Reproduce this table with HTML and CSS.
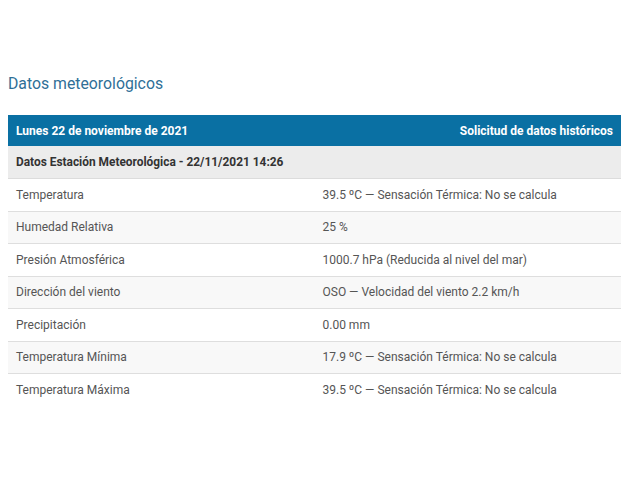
FILE: index.html
```html
<!DOCTYPE html>
<html lang="es">
<head>
<meta charset="utf-8">
<link rel="stylesheet" href="styles.css">
</head>
<body>
<h2 class="title">Datos meteorológicos</h2>
<table class="wx">
  <thead>
    <tr class="head">
      <th>Lunes 22 de noviembre de 2021</th>
      <th class="right">Solicitud de datos históricos</th>
    </tr>
    <tr class="sub">
      <th colspan="2">Datos Estación Meteorológica - 22/11/2021 14:26</th>
    </tr>
  </thead>
  <tbody>
    <tr><td>Temperatura</td><td>39.5 ºC — Sensación Térmica: No se calcula</td></tr>
    <tr class="alt"><td>Humedad Relativa</td><td>25 %</td></tr>
    <tr><td>Presión Atmosférica</td><td>1000.7 hPa (Reducida al nivel del mar)</td></tr>
    <tr class="alt"><td>Dirección del viento</td><td>OSO — Velocidad del viento 2.2 km/h</td></tr>
    <tr><td>Precipitación</td><td>0.00 mm</td></tr>
    <tr class="alt"><td>Temperatura Mínima</td><td>17.9 ºC — Sensación Térmica: No se calcula</td></tr>
    <tr class="last"><td>Temperatura Máxima</td><td>39.5 ºC — Sensación Térmica: No se calcula</td></tr>
  </tbody>
</table>
</body>
</html>
```
FILE: styles.css
```css
html, body { background: #fff; }
body {
  margin: 0;
  padding: 0 21px 0 8px;
  font-family: Roboto, "Liberation Sans", sans-serif;
}
.title {
  margin: 74px 0 0;
  font-size: 15.8px;
  line-height: 19px;
  font-weight: 400;
  color: #2f6f97;
}
.wx {
  width: 613px;
  margin-top: 22px;
  border-collapse: collapse;
  table-layout: fixed;
  font-size: 12px;
}
.wx th, .wx td {
  text-align: left;
  padding: 0 8px;
  vertical-align: middle;
}
.head th {
  background: #0a70a3;
  color: #fff;
  font-weight: 700;
  font-size: 12px;
  height: 31px;
}
.head th.right { text-align: right; }
.sub th {
  background: #ececec;
  color: #333;
  font-weight: 700;
  font-size: 11.9px;
  height: 32px;
  border-bottom: 1px solid #dcdcdc;
}
tbody td {
  color: #555;
  height: 31.5px;
  border-bottom: 1px solid #dedede;
}
tbody tr.alt td { background: #f8f8f8; }
tbody tr.last td { border-bottom: 0; }
```
